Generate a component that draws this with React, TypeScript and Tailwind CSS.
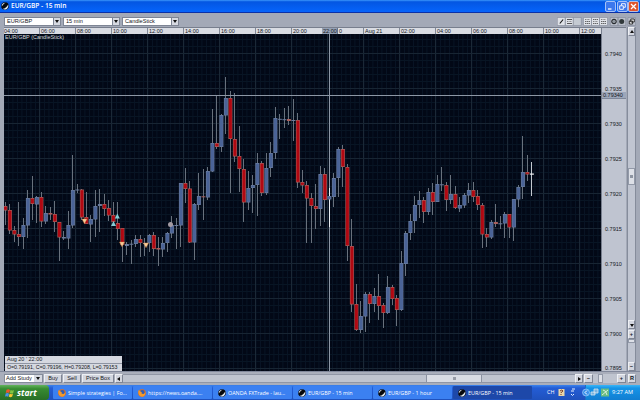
import React from "react";

type Candle = [number, number, number, number, "r" | "b" | "w"];

// high, low, body top, body bottom, tone
const candles: Candle[] = [
  [202, 225, 206, 210.5, "r"], [204, 234, 210, 230.5, "r"], [226, 242, 230, 234.5, "r"], [202, 246, 234, 237, "r"],
  [218, 249, 225, 237, "b"], [190, 238, 198, 225.5, "b"], [176, 220, 198, 204, "r"], [196, 223, 197, 204.5, "b"],
  [192, 227, 197, 221.5, "r"], [206, 224, 213, 221.5, "b"], [207, 220, 213, 214.5, "r"], [201, 232, 214, 222, "r"],
  [222, 261, 222, 237.5, "r"], [231, 240, 237, 238.5, "b"], [211, 249, 225, 238.5, "b"], [155, 228, 190, 225.5, "b"],
  [184, 193, 189.5, 190.5, "b"], [189, 220, 189.5, 217.5, "r"], [192, 224, 217, 224, "r"], [215, 242, 219, 224.5, "b"],
  [190, 237, 206, 219.5, "b"], [189, 232, 204, 206, "b"], [194, 216, 204, 209, "r"], [200, 221, 208, 215.5, "r"],
  [202, 223, 215, 222, "r"], [202, 240, 223, 229, "r"], [228, 262, 228, 245, "r"], [242, 255, 244, 246, "b"],
  [240, 264, 243.7, 244.5, "b"], [235, 247, 239, 244, "b"], [235, 257, 239, 243, "r"], [238, 256, 243, 244, "b"],
  [234, 252, 235, 243, "b"], [232, 256, 235, 249, "r"], [237, 266, 248, 249.5, "r"], [237, 257, 243, 249.5, "b"],
  [232, 252, 233, 243, "b"], [216, 238, 225, 233.5, "b"], [218, 249, 225, 225.8, "b"], [183, 247, 183, 225.5, "b"],
  [168, 203, 183, 189, "r"], [181, 243, 188.5, 242.5, "r"], [203, 260, 204, 242.5, "b"], [173, 210, 196, 205, "b"],
  [169, 220, 196.3, 197.3, "r"], [167, 200, 171, 197.5, "b"], [109, 172, 143, 171.5, "b"], [95, 149, 143, 147, "r"],
  [114, 152, 115, 147, "b"], [77, 134, 98, 115.5, "b"], [91, 193, 98, 139, "r"], [93, 162, 139, 156.5, "r"],
  [126, 192, 156, 169, "r"], [159, 222, 169, 202.5, "r"], [171, 210, 188, 202.5, "b"], [175, 213, 185, 188, "b"],
  [153, 216, 163, 185, "b"], [161, 196, 163, 193, "r"], [153, 195, 168, 193, "b"], [142, 177, 153, 168, "b"],
  [107, 159, 118, 153, "b"], [114, 139, 118.8, 119.6, "b"], [108, 128, 119.2, 119.8, "b"], [106, 125, 119, 121, "r"],
  [99, 141, 120, 120.8, "b"], [113, 188, 120, 182.5, "r"], [170, 193, 182, 185.5, "r"], [181, 243, 185, 198.5, "r"],
  [193, 243, 198, 206, "r"], [184, 229, 206, 209, "r"], [166, 226, 174, 209, "b"], [168, 222, 174, 200, "r"],
  [188, 227, 196, 199.5, "b"], [173, 207, 178, 197, "b"], [147, 197, 149, 178, "b"], [145, 187, 149, 167, "r"],
  [164, 261, 167, 246, "r"], [219, 312, 246, 304.5, "r"], [284, 331, 304, 330, "r"], [301, 333, 316, 330, "b"],
  [292, 332, 294, 316.5, "b"], [292, 323, 294, 304, "r"], [288, 312, 296, 304, "b"], [274, 320, 296, 306, "r"],
  [303, 328, 305, 313, "r"], [276, 314, 287, 313, "b"], [285, 305, 287, 299, "r"], [295, 326, 298, 310, "r"],
  [251, 311, 263, 310, "b"], [231, 276, 233, 264, "b"], [214, 240, 221, 233, "b"], [196, 233, 205, 221, "b"],
  [191, 218, 200, 205, "b"], [197, 223, 200, 212, "r"], [188, 215, 192, 212, "b"], [183, 215, 192, 202, "r"],
  [175, 202, 184, 202, "b"], [167, 191, 184.3, 185.3, "b"], [182, 211, 185, 200, "r"], [175, 204, 194, 200, "b"],
  [186, 209, 194, 208, "r"], [197, 212, 205, 208.5, "b"], [193, 208, 195, 205.5, "b"], [183, 203, 190, 195.5, "b"],
  [182, 202, 190, 197, "r"], [190, 210, 196, 205, "r"], [203, 248, 205, 234.5, "r"], [228, 247, 234, 237.5, "r"],
  [220, 239, 222, 237.5, "b"], [204, 227, 222, 224, "r"], [216, 229, 223.3, 224.2, "b"], [212, 238, 214, 223.5, "b"],
  [214, 238, 214, 227.5, "r"], [199, 241, 199, 227.5, "b"], [185, 207, 187, 199.5, "b"], [136, 199, 172, 187, "b"],
  [155, 181, 172, 174.5, "r"], [162, 196, 173.5, 174.7, "w"],
];

const times = ["04:00", "06:00", "08:00", "10:00", "12:00", "14:00", "16:00", "18:00", "20:00", "", "Aug 21", "02:00", "04:00", "06:00", "08:00", "10:00", "12:00"];
const prices = ["0.7940", "0.7935", "0.7930", "0.7925", "0.7920", "0.7915", "0.7910", "0.7905", "0.7900", "0.7895"];

function Chart() {
  const vMinor = Array.from({ length: 133 }, (_, i) => 3.5 + i * 4.5);
  const hMinor = Array.from({ length: 48 }, (_, i) => 39.5 + i * 7);
  return (
    <svg className="block h-[337px] w-[597px] shrink-0 bg-[#020816]" viewBox="4 34 597 337">
      {vMinor.map((x) => <rect key={x} x={x} y={34} width={0.9} height={338} fill="#091626" />)}
      {hMinor.map((y) => <rect key={y} x={4} y={y - 0.5} width={597} height={1} fill="#081524" />)}
      {Array.from({ length: 16 }, (_, i) => <rect key={i} x={39 + i * 36} y={34} width={1} height={338} fill="#1b2836" />)}
      {Array.from({ length: 10 }, (_, i) => <rect key={i} x={4} y={53 + i * 35} width={597} height={1} fill="#182533" />)}
      <rect x={329} y={34} width={1} height={338} fill="#8d97a5" />
      {candles.map(([hi, lo, t, b, c], i) => {
        const x = 5.4 + i * 4.5;
        const edge = c === "r" ? "#a9605c" : c === "b" ? "#6b7d9e" : "#f1f3f5";
        const fill = c === "r" ? "#b10812" : c === "b" ? "#4a6397" : "#ffffff";
        const tall = b - t > 2.2;
        return (
          <g key={i}>
            <rect x={Math.round(x - 0.5)} y={hi} width={1} height={lo - hi} fill={c === "w" ? "#c3c9d0" : i === 72 ? "#e8ecf0" : "#68717c"} />
            <rect x={x - 2} y={t} width={4} height={Math.max(1, b - t)} fill={edge} />
            {tall && <rect x={x - 1.45} y={t + 0.7} width={2.9} height={b - t - 1.4} fill={fill} />}
          </g>
        );
      })}
      <rect x={4} y={95} width={597} height={1} fill="#8d97a5" />
      {[[84.5, 221], [122, 244], [146, 245]].map(([x, y]) => (
        <path key={x} d={`M${x - 2.5} ${y - 2}h5l-2.5 4.8z`} fill="#f5cf9c" stroke="#d87838" strokeWidth={0.4} />
      ))}
      {[[117.3, 216.5], [113.5, 224]].map(([x, y]) => (
        <path key={x} d={`M${x - 2.5} ${y + 2}h5l-2.5 -5z`} fill="#86ccd4" />
      ))}
      <circle cx={170.5} cy={224.5} r={2.5} fill="#a39ba3" />
    </svg>
  );
}

function Select({ label, w }: { label: string; w: string }) {
  return (
    <div className={`flex h-[9px] border border-[#7e8594] bg-white ${w}`}>
      <span className="flex-1 pl-[2px] text-[5.6px] leading-[7px]">{label}</span>
      <span className="flex w-[7px] items-center justify-center border-l border-[#7e8594] bg-[#d6d9e1]"><Tri d="M0 0h4L2 3z" /></span>
    </div>
  );
}

function Tri({ d }: { d: string }) {
  return <svg className="size-[4px]" viewBox="0 0 4 4"><path d={d} fill="#111" /></svg>;
}

function Btn({ children, w }: { children?: React.ReactNode; w: string }) {
  return (
    <div className={`flex h-[9px] shrink-0 items-center justify-center border border-t-[#eef0f4] border-r-[#7f8594] border-b-[#7f8594] border-l-[#eef0f4] bg-[#d3d6df] text-[5.6px] leading-[7px] ${w}`}>{children}</div>
  );
}

function Oanda() {
  return (
    <svg className="size-[8px] shrink-0" viewBox="0 0 8 8">
      <circle cx="4" cy="4" r="3.8" fill="#07090d" />
      <path d="M.8 4.6C.5 2.2 2 .8 4.7.8 2.9 1.5 2 2.7.8 4.6z" fill="#e9eef4" />
      <path d="M1.7 6.8C4 6.5 5.8 5 7.2 2.4 7.9 5 6.1 7.9 3.2 7.5z" fill="#dce5ef" />
    </svg>
  );
}

function Firefox() {
  return (
    <svg className="size-[8px] shrink-0" viewBox="0 0 8 8">
      <circle cx="4" cy="4" r="3.8" fill="#e56a16" />
      <circle cx="4.3" cy="3.3" r="2.3" fill="#315eb3" />
      <path d="M.5 1.2C2 1.4 2.4 3 4.2 3.3 3 3.8 3.4 5 5.2 5c1.4-.2 2-1.2 1.9-2.8C8 5 6.6 7.6 4 7.8 1.1 7.5-.2 4.6.5 1.2z" fill="#f4992c" />
    </svg>
  );
}

function WinBtn({ kind }: { kind: "min" | "max" | "close" }) {
  return (
    <svg className="size-[11px]" viewBox="0 0 11 11">
      <rect x=".5" y=".5" width="10" height="10" rx="1.5" fill={kind === "close" ? "#df552d" : "#3c78ed"} stroke="#c7d8fa" strokeWidth=".8" />
      {kind === "min" && <path d="M3 8h3.5" stroke="#fff" strokeWidth="1.3" />}
      {kind === "max" && <path d="M4.5 4.5V2.7H8.3v3.6H6.5M2.7 4.8h3.6v3.5H2.7z" stroke="#fff" strokeWidth=".9" fill="none" />}
      {kind === "close" && <path d="M3 3l5 5M8 3L3 8" stroke="#fff" strokeWidth="1.3" />}
    </svg>
  );
}

function ToolGlyphs() {
  return (
    <svg className="ml-auto h-[9px] w-[79px]" viewBox="557 0 79 9">
      <g fill="#dfe2e8" stroke="#838a99" strokeWidth=".6">
        <path d="M557.3.5h8v8h-8zM565.3.5h8v8h-8zM583.5.5h8v8h-8zM591.5.5h8v8h-8zM599.5.5h8v8h-8z" />
        <path d="M573.3.5h8v8h-8z" fill="#c4cad2" />
        <path d="M610.3.5h7.7v8h-7.7zM618 .5h7.7v8H618zM628 .5h7.5v8H628z" fill="#b9bec9" />
      </g>
      <path d="M559.8 6.5l3.3-4" stroke="#111" strokeWidth="1.1" />
      <path d="M567 2.5h5M567 6.5h5" stroke="#333" strokeWidth=".8" />
      <path d="M567 4.5h5M585 2.5h5M593 4.5h5M601 2.5h5" stroke="#555" strokeWidth=".7" strokeDasharray="1 .6" />
      <path d="M585 4.5h5M585 6.5h5M593 2.5h5M593 6.5h5M601 4.5h5M601 6.5h5" stroke="#444" strokeWidth=".8" strokeDasharray="1.5 .5" />
      <circle cx="614" cy="4.5" r="2.3" fill="#8d949c" stroke="#16191c" strokeWidth="1" />
      <circle cx="621.7" cy="4.5" r="2.5" fill="#30383a" />
      <path d="M630.8 2h3.5v3h-3.5zM629.3 4h3.3v3h-3.3z" fill="#eee" stroke="#111" strokeWidth=".8" />
    </svg>
  );
}

const tasks = [
  ["ff", "Simple strategies | Fo..."], ["ff", "https://news.oanda...."], ["o", "OANDA FXTrade - lau..."],
  ["o", "EUR/GBP - 15 min"], ["o", "EUR/GBP - 1 hour"], ["o", "EUR/GBP - 15 min"],
];

export default function App() {
  return (
    <div className="flex h-[400px] w-[640px] flex-col overflow-hidden whitespace-nowrap bg-[#a3a9b7] font-['Liberation_Sans',Arial,sans-serif] text-[#16181d]">
      <header className="flex h-[13px] shrink-0 items-center border-b border-[#0b30a6] bg-linear-to-b from-[#3c96fb] via-[#0456e2] via-15% to-[#0664fb] pr-[1px] pl-[1px]">
        <Oanda />
        <h1 className="ml-[2px] font-['Open_Sans',sans-serif] text-[6.6px] leading-[12px] font-semibold tracking-[-.02px] text-white">EUR/GBP - 15 min</h1>
        <div className="ml-auto flex gap-[0.5px]"><WinBtn kind="min" /><WinBtn kind="max" /><WinBtn kind="close" /></div>
      </header>

      <div className="flex h-[14px] shrink-0 items-start gap-[2px] pt-[4px] pr-[4px] pl-[4px]">
        <Select label="EUR/GBP" w="w-[57px]" />
        <Select label="15 min" w="w-[57px]" />
        <Select label="CandleStick" w="w-[57px]" />
        <ToolGlyphs />
      </div>

      <main className="flex h-[344px] shrink-0 pl-[4px]">
        <section className="relative flex w-[597px] shrink-0 flex-col">
          <div className="relative flex h-[7px] shrink-0 overflow-hidden border-t border-[#777e8d] bg-[#d9dce3] text-[5.5px] leading-[6px]">
            {times.map((t, i) => (
              <span key={i} className={`w-[36px] shrink-0 pl-[1px] ${i === 0 ? "-ml-px" : "border-l border-[#828997]"}`}>
                {i === 9 ? <span className="pl-[10px]">0</span> : t}
              </span>
            ))}
            <span className="absolute top-0 left-[318px] h-[6px] w-[16px] border-r border-[#697384] bg-[#94a0b4] pl-[1px]">22:00</span>
          </div>
          <Chart />
          <span className="absolute top-[7px] left-[1px] text-[5.5px] leading-[6px] text-[#d6dade]">EUR/GBP (CandleStick)</span>
          <div className="absolute bottom-0 left-px w-[117px] bg-[#d5d8e0] text-[5.5px] leading-[7px]">
            <p className="h-[8px] border-b border-[#8d94a2] pl-[2px]">Aug 20 ' 22:00</p>
            <p className="h-[7px] pl-[2px] text-[5.3px] tracking-[-.05px]">O=0.79191, C=0.79196, H=0.79208, L=0.79153</p>
          </div>
        </section>

        <aside className="relative h-[344px] w-[25px] shrink-0 overflow-hidden border-t border-l border-[#777e8d] bg-[#bfc4d0] pt-[9px] text-[5.5px]">
          {prices.map((p, i) => <p key={p} className={`pl-[3px] leading-[35px] ${i === 9 ? "-mt-[1px] h-[35px]" : "h-[35px]"}`}>{p}</p>)}
          <span className="absolute top-[64px] left-0 h-[7px] w-[24px] border-b border-[#7e8799] bg-[#9da7ba] pl-[1px] leading-[7px]">0.79340</span>
        </aside>

        <div className="ml-[1px] flex w-[9px] shrink-0 flex-col border-x border-[#858c9b] bg-[#c0c5d1]">
          <Btn w="w-[7px]"><Tri d="M0 3h4L2 0z" /></Btn>
          <div className="h-[132px]" />
          <div className="flex h-[17px] items-center justify-center border border-[#9299a8] bg-[#dde0e7]"><i className="size-[3px] bg-[#8d94a1]" /></div>
          <div className="h-[135px]" />
          <Btn w="w-[7px]"><Tri d="M0 1h4L2 4z" /></Btn>
          <div className="h-[1px]" />
          <Btn w="w-[7px]"><b>+</b></Btn>
          <div className="h-[4px] border border-[#9299a8] bg-[#dde0e7]" />
          <div className="flex-1" />
          <Btn w="w-[7px]"><b>−</b></Btn>
        </div>
      </main>

      <div className="flex h-[14px] shrink-0 items-center border-t border-[#80879a] bg-[#a9aebb] pr-[4px] pl-[4px]">
        <div className="flex h-[9px] w-[39px] border border-[#858c9b] bg-white text-[5.6px] leading-[7px]">
          <span className="flex-1 pl-[1px]">Add Study</span>
          <span className="flex w-[8px] items-center justify-center bg-[#d6d9e1]"><Tri d="M0 0h4L2 3z" /></span>
        </div>
        <div className="ml-[1px] flex gap-[1px]"><Btn w="w-[18px]">Buy</Btn><Btn w="w-[18px]">Sell</Btn><Btn w="w-[32px]">Price Box</Btn></div>
        <div className="ml-[1px] flex h-[9px] w-[468px] border-y border-[#9096a5] bg-[#bfc4cf]">
          <div className="-my-px"><Btn w="w-[8px]"><Tri d="M3 0v4L0 2z" /></Btn></div>
          <div className="w-[303px]" />
          <div className="flex h-[7px] w-[56px] items-center justify-center border-x border-[#8b92a1] bg-[#d9dce4]"><i className="size-[3px] bg-[#969ba6]" /></div>
          <div className="flex-1" />
          <div className="-my-px"><Btn w="w-[8px]"><Tri d="M1 0v4L4 2z" /></Btn></div>
        </div>
        <div className="ml-[1px] flex w-[42px] items-center bg-[#bfc4cf]">
          <Btn w="w-[9px]"><b>−</b></Btn><div className="flex-1" /><div className="h-[9px] w-[5px] border border-[#9299a8] bg-[#dde0e7]" /><div className="w-[14px]" /><Btn w="w-[9px]"><b>+</b></Btn>
        </div>
        <div className="ml-auto"><Btn w="w-[8px]"><b>R</b></Btn></div>
      </div>

      <footer className="flex h-[15px] shrink-0 bg-linear-to-b from-[#3d84ed] via-[#245dd5] via-20% to-[#1f51bd] font-['Open_Sans',sans-serif] text-[5.4px] text-white">
        <div className="flex w-[49px] items-center rounded-r-[4px] bg-linear-to-b from-[#63b45c] via-[#388c33] via-25% to-[#286e25] pl-[5px]">
          <svg className="size-[10px]" viewBox="0 0 10 10">
            <path d="M1.5 1.8Q3.3.7 5 1.9L4.2 5Q2.6 4 .8 5z" fill="#ee562b" /><path d="M5.5 2.1Q7.2 3 9 1.9L8.2 5Q6.5 6 4.8 5z" fill="#82c543" />
            <path d="M.7 5.5Q2.5 4.6 4 5.7L3.2 8.7Q1.6 7.7 0 8.6z" fill="#4b91e8" /><path d="M4.6 5.8Q6.5 6.8 8 5.6L7.2 8.6Q5.4 9.7 3.8 8.6z" fill="#f8c830" />
          </svg>
          <strong className="ml-[2px] font-['Open_Sans',sans-serif] text-[8.5px] leading-[13px] font-bold italic">start</strong>
        </div>
        <nav className="ml-[4px] flex pt-[1px]">
          {tasks.map(([icon, label], i) => (
            <div key={i} className={`mr-px flex h-[13px] w-[79px] items-center gap-[2px] rounded-[1px] pl-[5px] ${i === 5 ? "bg-[#1d48a9]" : "bg-[#3b80f1]"}`}>
              {icon === "ff" ? <Firefox /> : <Oanda />}<span className="leading-[12px]">{label}</span>
            </div>
          ))}
        </nav>
        <div className="ml-[14px] flex w-[38px] items-center gap-[4px]">
          <span>CH</span>
          <svg className="h-[9px] w-[21px]" viewBox="0 0 21 9"><rect x=".5" y="1" width="6" height="7" fill="#e8d5a9" /><path d="M2 3q2-2 3 0-2 1-2 2m0 1v1" stroke="#7b3c25" fill="none" /><path d="M14 1h3M13 3h3M13 6l1.5 1.5L16 6" stroke="#e9f1ff" fill="none" /></svg>
        </div>
        <div className="flex flex-1 items-center border-l border-[#1d6dc4] bg-linear-to-b from-[#39b7f7] via-[#1594e8] via-20% to-[#117ed1]">
          <svg className="-ml-[4px] h-[11px] w-[30px]" viewBox="0 0 30 11">
            <circle cx="4" cy="5.5" r="3.5" fill="#3c91ea" stroke="#b6dcff" strokeWidth=".6" /><path d="M5 3.5l-2 2 2 2" stroke="#fff" fill="none" />
            <path d="M12 2h4v4h-4zM9 5h4v3H9z" fill="#78b3df" stroke="#d2e4ef" strokeWidth=".8" />
            <rect x="19" y="1.5" width="8" height="8" fill="#69bb82" /><path d="M20 8l6-5M21 3q3 0 4 5" stroke="#e3f7e6" strokeWidth=".9" fill="none" />
          </svg>
          <time className="text-[5.6px]">9:27 AM</time>
        </div>
      </footer>
    </div>
  );
}
